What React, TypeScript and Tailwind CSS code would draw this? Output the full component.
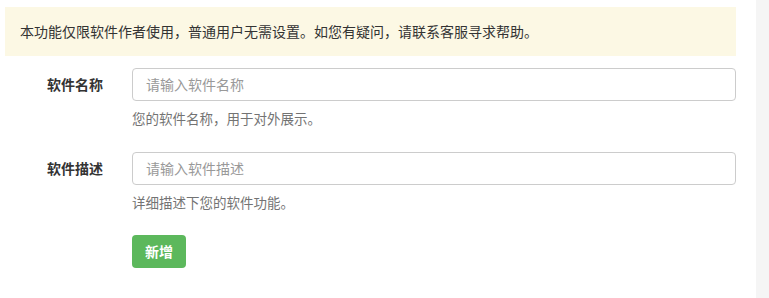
import React from "react";

export default function App() {
  const font = { fontFamily: '"Noto Sans CJK SC", "Noto Sans", sans-serif' };
  return (
    <div className="flex w-[769px] h-[298px] bg-white overflow-hidden" style={font}>
      <div className="w-[756px] pl-[5px] pr-[20px] pt-[7px]">
        <div className="h-[49px] bg-[#fcf8e4] flex items-center pl-[15px] text-[14px] text-[#333]">
          本功能仅限软件作者使用，普通用户无需设置。如您有疑问，请联系客服寻求帮助。
        </div>

        <div className="mt-[12px] flex">
          <div className="w-[112px] pl-[42px] h-[33px] flex items-center text-[14px] font-bold text-[#333]">
            软件名称
          </div>
          <div className="w-[604px] ml-[15px]">
            <div className="h-[33px] border border-[#ccc] rounded-[4px] flex items-center pl-[13px] text-[14px] text-[#999]">
              请输入软件名称
            </div>
            <div className="mt-[7px] h-[20px] leading-[20px] text-[13.5px] text-[#737373]">
              您的软件名称，用于对外展示。
            </div>
          </div>
        </div>

        <div className="mt-[24px] flex">
          <div className="w-[112px] pl-[42px] h-[33px] flex items-center text-[14px] font-bold text-[#333]">
            软件描述
          </div>
          <div className="w-[604px] ml-[15px]">
            <div className="h-[33px] border border-[#ccc] rounded-[4px] flex items-center pl-[13px] text-[14px] text-[#999]">
              请输入软件描述
            </div>
            <div className="mt-[7px] h-[20px] leading-[20px] text-[13.5px] text-[#737373]">
              详细描述下您的软件功能。
            </div>
          </div>
        </div>

        <div className="mt-[23px] pl-[127px]">
          <button className="w-[54px] h-[33px] rounded-[4px] bg-[#5cb85c] text-white text-[14px] font-bold flex items-center justify-center">
            新增
          </button>
        </div>
      </div>
      <div className="flex-1 bg-[#f5f5f5]" />
    </div>
  );
}
